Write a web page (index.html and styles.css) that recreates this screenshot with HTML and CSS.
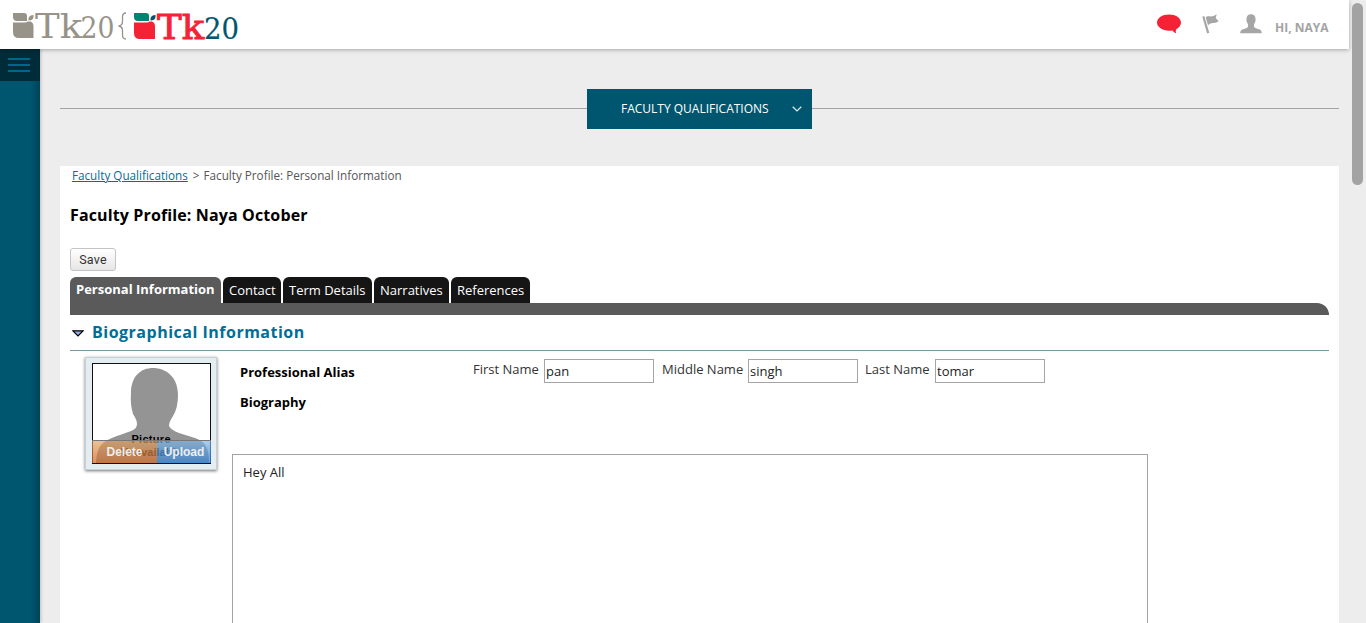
FILE: index.html
```html
<!DOCTYPE html>
<html lang="en">
<head>
<meta charset="utf-8">
<title>Faculty Profile</title>
<link rel="stylesheet" href="styles.css">
</head>
<body>
<div class="app">
  <header class="topbar">
    <svg class="logo" width="250" height="49" viewBox="0 0 250 49">
      <g fill="#989389">
        <path d="M13 13h11q3 0 3 3v5H17q-4 0-4-4zM28.500 20.500v-2q.5-3.500 5-3.500v2q-.5 3.500-5 3.500zM13 22.500h12q1.500 0 2.500-1h3q3 1 3 5v11.500H19q-6 0-6-6z"/>
        <text class="slab" x="35" y="38" font-size="34" textLength="47" lengthAdjust="spacingAndGlyphs">Tk</text>
        <text class="slab" x="80.500" y="38" font-size="29" textLength="34" lengthAdjust="spacingAndGlyphs">20</text>
      </g>
      <path d="M126 13q-3.500 0-3.500 4v4.500q0 4-4 4.500q4 .5 4 4.500v4.500q0 4 3.500 4" fill="none" stroke="#989389" stroke-width="1.300"/>
      <path d="M134 13h12q3 0 3 3v5h-11q-4 0-4-4z" fill="#008573"/>
      <path d="M150.500 20.500v-2q.5-3.500 5-3.500v2q-.5 3.500-5 3.500z" fill="#00566f"/>
      <path d="M134 22.500h13q1.500 0 2.500-1h2.500q3 1 3 5V39h-15q-6 0-6-6z" fill="#f52235"/>
      <text class="slab slab-red" x="157" y="38.500" font-size="34" textLength="47" lengthAdjust="spacingAndGlyphs">Tk</text>
      <text class="slab slab-blue" x="204" y="38.500" font-size="30" textLength="35" lengthAdjust="spacingAndGlyphs">20</text>
    </svg>
    <div class="user">
      <svg width="24" height="20" viewBox="0 0 24 20"><path d="M12 .5C5.300.5 0 4 0 8.600s5.300 8.100 12 8.100q2 0 3.300-.2 1.500 2 3.900 3-.7-2-.2-4.100c3-1.500 5-3.900 5-6.800C24 4 18.700.5 12 .5z" fill="#f52235"/></svg>
      <svg class="flag" width="18" height="20" viewBox="0 0 18 20"><path d="M.3 2.700l2-.6 5 16.700-2.200.6zM3.700 3.300c3-2.800 5 1.300 11-3l-1 3.700 3 3.300c-5 3-7 .5-10.700 3.900z" fill="#a6a6a6"/></svg>
      <svg class="person" width="22" height="20" viewBox="0 0 22 20"><path d="M11 .3c-3 0-4.500 2-4.500 4.800q-.3 1 .2 2.400.2 1.400 1.300 2.500v2.800q-.5 1.400-4 2.100C1 15.600.2 16.700.2 19.200h21.600c0-2.500-.8-3.600-3.800-4.300q-3.500-.7-4-2.100V10q1-1 1.300-2.500.5-1.400.2-2.400C15.500 2.300 14 .3 11 .3z" fill="#a6a6a6"/></svg>
      <span class="hello">HI, NAYA</span>
    </div>
  </header>
  <div class="shell">
    <aside class="rail"><div class="burger"><i></i><i></i><i></i></div></aside>
    <main class="main">
      <div class="switcher">
        <span class="rule"></span>
        <div class="picker"><span>FACULTY QUALIFICATIONS</span>
          <svg width="10" height="6" viewBox="0 0 10 6"><path d="M.7.700L5 4.900 9.300.7" fill="none" stroke="#dce9ed" stroke-width="1.300"/></svg>
        </div>
        <span class="rule"></span>
      </div>
      <section class="card">
        <nav class="crumbs"><a href="#">Faculty Qualifications</a><span class="gt">&gt;</span><span>Faculty Profile: Personal Information</span></nav>
        <h1>Faculty Profile: Naya October</h1>
        <button class="save">Save</button>
        <div class="tabs">
          <div class="tab active">Personal Information</div>
          <div class="tab contact">Contact</div>
          <div class="tab terms">Term Details</div>
          <div class="tab narratives">Narratives</div>
          <div class="tab references">References</div>
        </div>
        <div class="tabline"></div>
        <h2><svg width="12" height="7" viewBox="0 0 12 7"><path d="M1 .8h10L6 5.800z" fill="#91aee5" stroke="#000" stroke-width="1.200"/></svg>Biographical Information</h2>
        <div class="bio">
          <div class="photo">
            <div class="frame">
              <svg width="117" height="99" viewBox="0 0 117 99">
                <path d="M3 99C4 81 9 77 27 71L38 67Q44 65 44 60Q44 56 40 50Q37 40 38 29C38 12 48 4 60 4S85 12 85 31Q85 44 80 52Q76 58 76 62Q78 66 86 69L102 74C112 78 116 82 116 99z" fill="#949494"/>
                <text class="pic" x="58" y="79" text-anchor="middle" textLength="39">Picture</text>
                <text class="pic" x="58" y="92" text-anchor="middle">Unavailable</text>
              </svg>
              <div class="actions"><span class="delete">Delete</span><span class="upload">Upload</span></div>
            </div>
          </div>
          <div class="fields">
            <div class="names">
              <strong>Professional Alias</strong>
              <label class="first">First Name</label><input value="pan">
              <label class="middle">Middle Name</label><input value="singh">
              <label class="last">Last Name</label><input value="tomar">
            </div>
            <strong class="biography">Biography</strong>
            <div class="editor">Hey All</div>
          </div>
        </div>
      </section>
    </main>
  </div>
  <div class="scroll"></div>
</div>
</body>
</html>
```
FILE: styles.css
```css
* { box-sizing: border-box; }
body { margin: 0; font: 13px/18px "Open Sans", sans-serif; background: #ededed; color: #222; overflow: hidden; }
.app { height: 623px; overflow: hidden; }
.topbar { position: relative; z-index: 2; width: 1349px; height: 49px; background: #fff; box-shadow: 0 1px 4px rgba(0,0,0,.3); display: flex; justify-content: space-between; }
.logo { flex: none; }
.slab { font-family: "DejaVu Serif", serif; }
.slab-red { fill: #f52235; stroke: #f52235; stroke-width: .9px; }
.slab-blue { fill: #00566f; stroke: #00566f; stroke-width: .2px; }
.user { display: flex; align-items: flex-start; padding: 14px 19px 0 0; }
.flag { margin-left: 21px; }
.person { margin-left: 20px; }
.hello { font-size: 12px; font-weight: 700; color: #a3a3a3; margin: 5px 0 0 13px; width: 55px; white-space: nowrap; }
.shell { display: flex; height: 574px; }
.rail { position: relative; width: 40px; background: linear-gradient(90deg, #00566f 75%, #004458); box-shadow: 1px 0 3px rgba(0,0,0,.2); }
.burger { height: 32px; background: #002c39; padding: 9px 10px 0 8px; display: grid; gap: 4px; align-content: start; }
.burger i { height: 2px; background: #00658a; }
.main { width: 1299px; padding: 40px 0 0 20px; }
.switcher { display: flex; align-items: flex-start; height: 40px; }
.rule { flex: none; width: 527px; height: 1px; margin-top: 19px; background: #a3a3a3; }
.picker { width: 225px; height: 40px; background: #00566f; color: #fff; font-size: 12px; display: flex; align-items: center; justify-content: space-between; padding: 0 10px 0 34px; white-space: nowrap; }
.card { margin-top: 37px; height: 457px; background: #fff; padding: 0 10px; }
.crumbs { height: 20px; padding: 0 0 0 2px; font-size: 11.700px; color: #555; }
.crumbs a { color: #006e95; }
.gt { margin: 0 4px 0 5px; }
h1 { margin: 18px 0 0; font-size: 16px; letter-spacing: .13px; line-height: 22px; color: #000; }
.save { display: block; margin: 22px 0 0; width: 46px; height: 23px; padding: 0; border: 1px solid #c4c4c4; border-radius: 3px; background: linear-gradient(#fff, #e6e6e6); font: 12.500px Roboto, sans-serif; letter-spacing: .2px; color: #333; }
.tabs { display: flex; gap: 2px; margin-top: 6px; height: 26px; color: #fff; white-space: nowrap; }
.tab { background: #151515; border-radius: 6px 6px 0 0; line-height: 27px; padding-left: 6px; }
.active { width: 151px; background: #5a5a5a; font-weight: 700; line-height: 25px; }
.contact { width: 58px; }
.terms { width: 89px; }
.narratives { width: 75px; }
.references { width: 79px; }
.tabline { height: 12px; background: #5a5a5a; border-top-right-radius: 12px; }
h2 { margin: 0; height: 36px; border-bottom: 1px solid #7c98a7; color: #006e95; font-size: 16px; letter-spacing: .5px; line-height: 35px; display: flex; align-items: flex-start; padding-left: 2px; gap: 8px; white-space: nowrap; }
h2 svg { margin-top: 15px; }
.bio { display: flex; align-items: flex-start; }
.photo { margin: 6px 1px 0 15px; width: 132px; height: 113px; padding: 5px 6px; background: #e3edf2; border: 1px solid #c5d1d5; box-shadow: 0 1px 3px rgba(0,0,0,.55); }
.frame { position: relative; width: 119px; height: 101px; border: 1px solid #111; background: #fff; }
.frame svg { display: block; }
.pic { font: 700 11px "Liberation Sans", sans-serif; }
.actions { position: absolute; left: -1px; right: -1px; bottom: 0; height: 23px; display: flex; font: 700 12px/22px "Liberation Sans", sans-serif; color: #eee; border-top: 1px solid #777; }
.actions span { text-align: center; }
.delete { width: 65px; background: linear-gradient(rgba(222,162,100,.66), rgba(208,108,40,.74)); }
.upload { flex: 1; background: linear-gradient(rgba(132,180,226,.68), rgba(50,132,213,.78)); }
.fields { margin: 8px 0 0 14px; width: 916px; }
.names { display: flex; align-items: flex-start; height: 24px; color: #333; white-space: nowrap; }
strong { color: #000; padding-left: 8px; }
.names strong { width: 241px; padding-top: 4px; }
label { padding-top: 1px; }
.first { width: 71px; }
.middle { width: 86px; margin-left: 8px; }
.last { width: 70px; margin-left: 7px; }
input { width: 110px; height: 24px; border: 1px solid #a5a5a5; padding: 0 1px 1px; margin: 0; font: 13px "Open Sans", sans-serif; color: #222; background: #fff; }
.biography { display: block; margin-top: 10px; }
.editor { height: 190px; margin-top: 43px; border: 1px solid #a3a3a3; padding: 8px 10px; }
.scroll { position: absolute; z-index: 3; left: 1352px; top: 3px; width: 11px; height: 182px; border-radius: 6px; background: #a3a3a3; }
```
